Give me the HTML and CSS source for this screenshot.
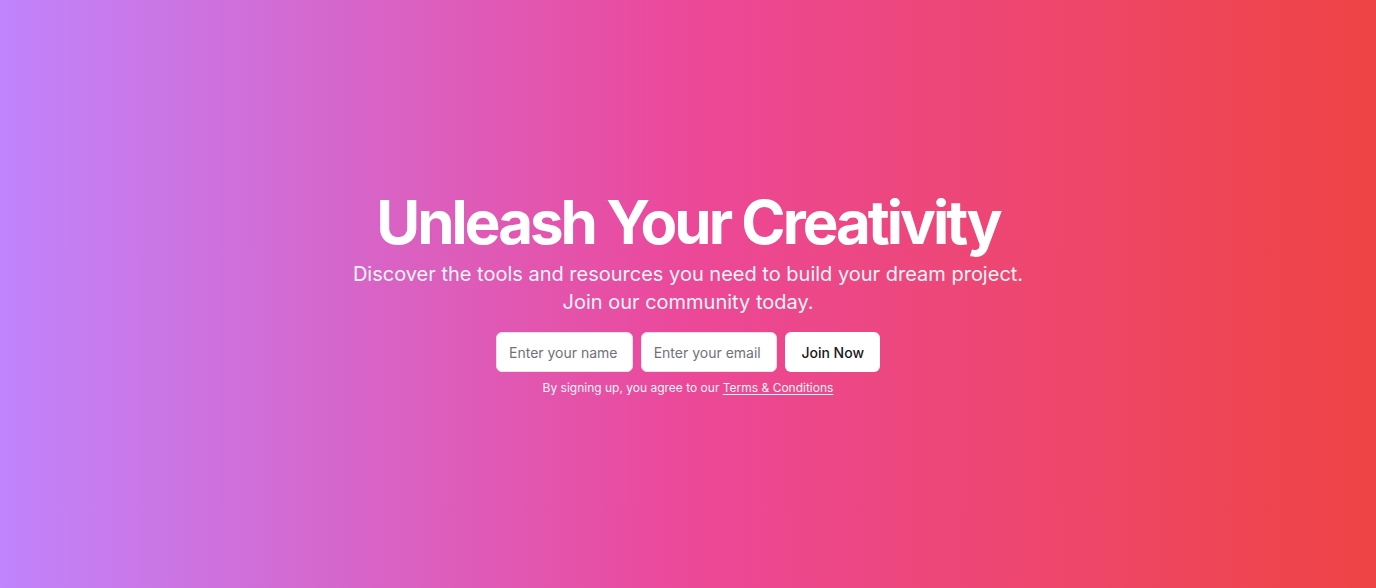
FILE: index.html
```html
<!DOCTYPE html>
<html lang="en">
<head>
<meta charset="utf-8">
<title>Unleash Your Creativity</title>
<link rel="stylesheet" href="styles.css">
</head>
<body>
<section class="hero">
  <div class="content">
    <div class="intro">
      <h1 class="title">Unleash Your Creativity</h1>
      <p class="lead">Discover the tools and resources you need to build your dream project. Join our community today.</p>
    </div>
    <div class="signup">
      <form class="form">
        <input class="field" type="text" placeholder="Enter your name">
        <input class="field" type="email" placeholder="Enter your email">
        <button class="btn" type="submit">Join Now</button>
      </form>
      <p class="terms">By signing up, you agree to our <a class="terms-link" href="#">Terms &amp; Conditions</a></p>
    </div>
  </div>
</section>
</body>
</html>
```

FILE: styles.css
```css
* { box-sizing: border-box; }
html, body { margin: 0; height: 100%; }
body {
  font-family: Inter, "Noto Sans", "Liberation Sans", sans-serif;
  color: #fff;
}
.hero {
  height: 588px;
  width: 100%;
  display: flex;
  align-items: center;
  justify-content: center;
  background: linear-gradient(to right, #c084fc, #ec4899, #ef4444);
}
.content {
  display: flex;
  flex-direction: column;
  align-items: center;
  gap: 16px;
  text-align: center;
  padding: 0 16px;
}
.intro {
  display: flex;
  flex-direction: column;
  align-items: center;
  gap: 8px;
}
.title {
  margin: 0;
  font-size: 60px;
  line-height: 60px;
  font-weight: 700;
  letter-spacing: -0.05em;
  color: #fff;
}
.lead {
  margin: 0;
  max-width: 700px;
  font-size: 20px;
  line-height: 28px;
  color: #f4f4f5;
}
.signup {
  width: 100%;
  max-width: 384px;
  display: flex;
  flex-direction: column;
  gap: 8px;
}
.form {
  display: flex;
  gap: 8px;
  margin: 0;
}
.field {
  flex: 1;
  min-width: 0;
  height: 40px;
  padding: 8px 12px;
  border: 1px solid #e4e4e7;
  border-radius: 6px;
  background: #fff;
  color: #000;
  font-family: inherit;
  font-size: 14px;
  outline: none;
}
.field::placeholder { color: #71717a; }
.btn {
  height: 40px;
  padding: 0 16px;
  border: none;
  border-radius: 6px;
  background: #fff;
  color: #18181b;
  font-family: inherit;
  font-size: 14px;
  font-weight: 500;
  cursor: pointer;
}
.terms {
  margin: 0;
  font-size: 12px;
  line-height: 16px;
  color: #f4f4f5;
}
.terms-link {
  color: inherit;
  text-decoration: underline;
  text-underline-offset: 2px;
}
```
